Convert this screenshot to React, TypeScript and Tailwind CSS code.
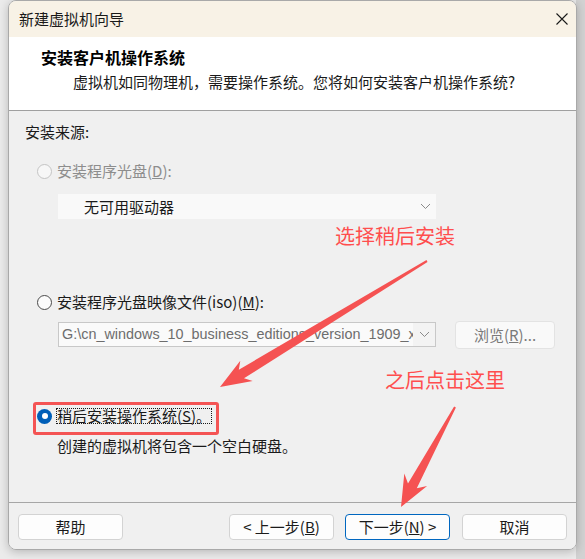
import React from "react";

const FONT = '"Noto Sans CJK SC", "Liberation Sans", sans-serif';

function Radio({ state }: { state: "disabled" | "off" | "on" }) {
  if (state === "on") {
    return (
      <span className="flex h-[15px] w-[15px] shrink-0 items-center justify-center rounded-full bg-[#005fb8]">
        <span className="h-[6px] w-[6px] rounded-full bg-white" />
      </span>
    );
  }
  return (
    <span
      className={
        state === "disabled"
          ? "h-[15px] w-[15px] shrink-0 rounded-full border border-[#c4c4c4] bg-[#f7f7f7]"
          : "h-[15px] w-[15px] shrink-0 rounded-full border border-[#4a4a4a] bg-[#fbfbfb]"
      }
    />
  );
}

function Chevron() {
  return (
    <svg width="11" height="7" viewBox="0 0 11 7">
      <path d="M1 1 L5.5 5.5 L10 1" fill="none" stroke="#8a8a8a" strokeWidth="1" />
    </svg>
  );
}

function Btn({ children, primary }: { children: React.ReactNode; primary?: boolean }) {
  return (
    <div
      className={
        primary
          ? "flex h-[26px] w-[105px] items-center justify-center rounded-[4px] border border-[#0067c0] bg-[#fdfdfd] text-[15px] text-[#1b1b1b]"
          : "flex h-[26px] w-[105px] items-center justify-center rounded-[4px] border border-[#d3d3d3] bg-[#fdfdfd] text-[15px] text-[#1b1b1b]"
      }
    >
      {children}
    </div>
  );
}

export default function App() {
  return (
    <div className="relative h-[559px] w-[585px] overflow-hidden bg-[#ebebeb]" style={{ fontFamily: FONT }}>
      {/* window behind, peeking out on the right */}
      <div className="absolute right-0 top-0 h-[559px] w-[9px] bg-[#d2d2d2]" />

      <div className="relative ml-[8px] flex h-[550px] w-[569px] flex-col overflow-hidden rounded-[8px] border border-[#a9a9a9] shadow-[0_2px_10px_rgba(0,0,0,0.22)]">
        {/* title bar */}
        <div className="flex h-[36px] shrink-0 items-center justify-between bg-[#f8f2e6] pl-[10px] pr-[8px]">
          <span className="text-[15px] leading-[20px] text-[#1a1a1a]">新建虚拟机向导</span>
          <svg width="12" height="12" viewBox="0 0 12 12">
            <path d="M0.5 0.5 L11.5 11.5 M11.5 0.5 L0.5 11.5" stroke="#1a1a1a" strokeWidth="1.1" />
          </svg>
        </div>

        {/* header */}
        <div className="h-[73px] shrink-0 bg-white pt-[10px]">
          <div className="pl-[32px] text-[16px] font-bold leading-[20px] text-black">安装客户机操作系统</div>
          <div className="mt-[5px] pl-[64px] text-[15px] leading-[20px] text-[#1a1a1a]">
            虚拟机如同物理机，需要操作系统。您将如何安装客户机操作系统?
          </div>
        </div>
        <div className="h-px shrink-0 bg-[#a0a0a0]" />

        {/* body */}
        <div className="flex-1 bg-[#f0f0f0] pl-[16px] text-[15px] leading-[20px] text-[#1a1a1a]">
          <div className="mt-[11px]">安装来源:</div>

          <div className="ml-[12px] mt-[19px] flex items-center gap-[5px] text-[#8d8d8d]">
            <Radio state="disabled" />
            <span>
              安装程序光盘(<span className="underline">D</span>):
            </span>
          </div>
          <div className="ml-[33px] mt-[13px] flex h-[25px] w-[378px] items-center justify-between bg-[#f9f9f9] pl-[26px] pr-[5px]">
            <span>无可用驱动器</span>
            <Chevron />
          </div>

          <div className="ml-[12px] mt-[73px] flex items-center gap-[5px]">
            <Radio state="off" />
            <span>
              安装程序光盘映像文件(iso)(<span className="underline">M</span>):
            </span>
          </div>
          <div className="ml-[33px] mt-[9px] flex items-start gap-[19px]">
            <div className="mt-px flex h-[25px] w-[378px] items-center border border-[#c8c8c8] bg-[#f3f3f3]">
              <div
                className="h-full w-[354px] overflow-hidden whitespace-nowrap bg-[#fafafa] pl-[3px] text-[14.4px] leading-[23px] text-[#6d6d6d]"
                style={{ fontFamily: '"Liberation Sans", sans-serif' }}
              >
                G:\cn_windows_10_business_editions_version_1909_x
              </div>
              <div className="flex flex-1 justify-center">
                <Chevron />
              </div>
            </div>
            <div className="flex h-[28px] w-[100px] items-center justify-center rounded-[4px] border border-[#e3e3e3] bg-[#f9f9f9] text-[#7a7a7a]">
              浏览(<span className="underline">R</span>)...
            </div>
          </div>

          <div className="ml-[12px] mt-[59px] flex items-center gap-[4px]">
            <Radio state="on" />
            <span className="border border-dotted border-[#1a1a1a] leading-[14px]">
              稍后安装操作系统(<span className="underline">S</span>)。
            </span>
          </div>
          <div className="ml-[32px] mt-[12px]">创建的虚拟机将包含一个空白硬盘。</div>
        </div>
        <div className="h-px shrink-0 bg-[#a6a6a6]" />

        {/* footer */}
        <div className="flex h-[46px] shrink-0 items-start bg-[#f0f0f0] pl-[9px] pr-[9px] pt-[11px]">
          <Btn>帮助</Btn>
          <div className="flex-1" />
          <Btn>
            &lt; 上一步(<span className="underline">B</span>)
          </Btn>
          <div className="w-[11px]" />
          <Btn primary>
            下一步(<span className="underline">N</span>) &gt;
          </Btn>
          <div className="w-[12px]" />
          <Btn>取消</Btn>
        </div>
      </div>

      {/* annotations */}
      <div className="pointer-events-none absolute inset-0">
        <div className="absolute left-[33px] top-[402px] h-[33px] w-[186px] rounded-[3px] border-[3px] border-[#f45454]" />
        <div className="absolute left-[335px] top-[224px] text-[20px] leading-[24px] text-[#ff4e4e]">选择稍后安装</div>
        <div className="absolute left-[385px] top-[368px] text-[20px] leading-[24px] text-[#ff4e4e]">之后点击这里</div>
        <svg className="absolute left-0 top-0" width="585" height="559" viewBox="0 0 585 559">
          <polygon
            fill="#f55252"
            points="220,387 252.7,381.1 244,378.3 427.5,261.9 426.5,260.1 238.8,369.7 240.3,360.7"
          />
          <polygon
            fill="#f55252"
            points="401,507 427.1,485.9 416.8,488.3 455.9,407.5 454.1,406.5 408,483.5 404.3,473.5"
          />
        </svg>
      </div>
    </div>
  );
}
